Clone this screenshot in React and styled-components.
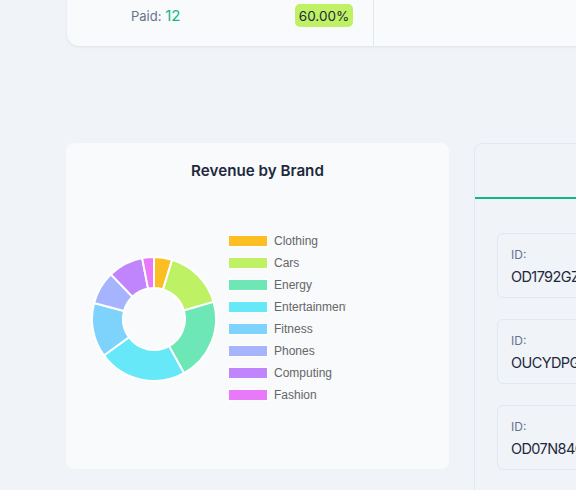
import React from 'react'
import styled, { createGlobalStyle } from 'styled-components';

const GlobalStyle = createGlobalStyle`
    html, body {
        margin: 0;
        padding: 0;
        background: #f0f3f8;
        font-family: Inter, "Noto Sans", sans-serif;
        overflow: hidden;
    }
`;

const brands = [
    { name: 'Clothing', color: '#fbbf24', value: 17 },
    { name: 'Cars', color: '#bef264', value: 57 },
    { name: 'Energy', color: '#6ee7b7', value: 77 },
    { name: 'Entertainment', color: '#67e8f9', value: 83 },
    { name: 'Fitness', color: '#7dd3fc', value: 51 },
    { name: 'Phones', color: '#a5b4fc', value: 31 },
    { name: 'Computing', color: '#c084fc', value: 33 },
    { name: 'Fashion', color: '#e879f9', value: 11 },
];

const orders = ['OD1792GZ4K', 'OUCYDPGH2M', 'OD07N84QX1'];

const Page = styled('div')`
    width: 900px;
    padding-left: 66px;
`;

const StatsCard = styled('div')`
    margin-left: 1px;
    height: 46px;
    display: flex;
    background: #f8fafc;
    border-radius: 0 0 0 12px;
    box-shadow: 0px 1px 3px 0px rgba(15, 23, 42, 0.08);
`;

const StatsCell = styled('div')`
    width: 307px;
    box-sizing: border-box;
    padding: 4px 20px 0 64px;
    display: flex;
    justify-content: space-between;
    align-items: flex-start;
    border-right: 1px solid #e2e8f0;
`;

const PaidLabel = styled('div')`
    font-size: 13px;
    color: #64748b;
    line-height: 23px;
    span {
        color: #10b981;
        font-size: 15px;
    }
`;

const Badge = styled('div')`
    width: 58px;
    height: 23px;
    border-radius: 5px;
    background: #bef264;
    color: #1e293b;
    font-size: 13.5px;
    display: flex;
    align-items: center;
    justify-content: center;
`;

const Row = styled('div')`
    margin-top: 97px;
    display: flex;
    gap: 25px;
`;

const RevenueCard = styled('div')`
    width: 383px;
    height: 326px;
    background: #f8fafc;
    border-radius: 8px;
    display: flex;
    flex-direction: column;
`;

const Title = styled('h3')`
    margin: 0;
    padding-top: 19px;
    text-align: center;
    font-size: 15.2px;
    line-height: 18px;
    font-weight: 600;
    color: #1e293b;
`;

const ChartRow = styled('div')`
    margin-top: 10px;
    height: 258px;
    display: flex;
    align-items: center;
    padding-left: 24px;
`;

const Legend = styled('ul')`
    list-style: none;
    margin: -2px 0 0 11px;
    padding: 0;
    width: 117px;
    overflow: hidden;
`;

const LegendItem = styled('li')`
    height: 22px;
    display: flex;
    align-items: center;
    white-space: nowrap;
    font-family: "Liberation Sans", Arial, sans-serif;
    font-size: 12px;
    color: #666;
`;

const Swatch = styled('span')`
    flex: none;
    width: 38px;
    height: 10px;
    margin-right: 7px;
    background: ${({ color }) => color};
    box-shadow: 0 0 0 1px #fff;
`;

const OrdersCard = styled('div')`
    width: 383px;
    height: 360px;
    box-sizing: border-box;
    border: 1px solid #e2e8f0;
    border-radius: 8px;
    background: #f0f3f8;
`;

const OrdersHeader = styled('div')`
    height: 53px;
    border-bottom: 2px solid #10b981;
`;

const OrderList = styled('div')`
    padding: 34px 0 0 22px;
    display: flex;
    flex-direction: column;
    gap: 21px;
`;

const OrderItem = styled('div')`
    height: 65px;
    box-sizing: border-box;
    border: 1px solid #e2e8f0;
    border-radius: 6px;
    padding: 12px 13px 0;
`;

const OrderLabel = styled('div')`
    font-size: 12px;
    line-height: 17px;
    color: #64748b;
`;

const OrderValue = styled('div')`
    margin-top: 5px;
    font-size: 14.5px;
    line-height: 18px;
    letter-spacing: -0.6px;
    color: #1e293b;
`;

function arcPath(cx, cy, R, r, a0, a1) {
    const rad = (a) => ((a - 90) * Math.PI) / 180;
    const p = (rr, a) => [cx + rr * Math.cos(rad(a)), cy + rr * Math.sin(rad(a))];
    const large = a1 - a0 > 180 ? 1 : 0;
    const [x0, y0] = p(R, a0);
    const [x1, y1] = p(R, a1);
    const [x2, y2] = p(r, a1);
    const [x3, y3] = p(r, a0);
    return `M${x0} ${y0} A${R} ${R} 0 ${large} 1 ${x1} ${y1} L${x2} ${y2} A${r} ${r} 0 ${large} 0 ${x3} ${y3} Z`;
}

function Donut() {
    let start = 0;
    return (
        <svg width="128" height="128" viewBox="0 0 128 128">
            {brands.map((b) => {
                const d = arcPath(64, 64, 62, 31, start, start + b.value);
                start += b.value;
                return <path key={b.name} d={d} fill={b.color} stroke="#fff" strokeWidth="2" strokeLinejoin="round" />;
            })}
        </svg>
    );
}

function App() {
    return (
        <Page>
            <GlobalStyle />
            <StatsCard>
                <StatsCell>
                    <PaidLabel>Paid: <span>12</span></PaidLabel>
                    <Badge>60.00%</Badge>
                </StatsCell>
            </StatsCard>
            <Row>
                <RevenueCard>
                    <Title>Revenue by Brand</Title>
                    <ChartRow>
                        <Donut />
                        <Legend>
                            {brands.map((b) => (
                                <LegendItem key={b.name}>
                                    <Swatch color={b.color} />
                                    {b.name}
                                </LegendItem>
                            ))}
                        </Legend>
                    </ChartRow>
                </RevenueCard>
                <OrdersCard>
                    <OrdersHeader />
                    <OrderList>
                        {orders.map((id) => (
                            <OrderItem key={id}>
                                <OrderLabel>ID:</OrderLabel>
                                <OrderValue>{id}</OrderValue>
                            </OrderItem>
                        ))}
                    </OrderList>
                </OrdersCard>
            </Row>
        </Page>
    )
}

export default App
